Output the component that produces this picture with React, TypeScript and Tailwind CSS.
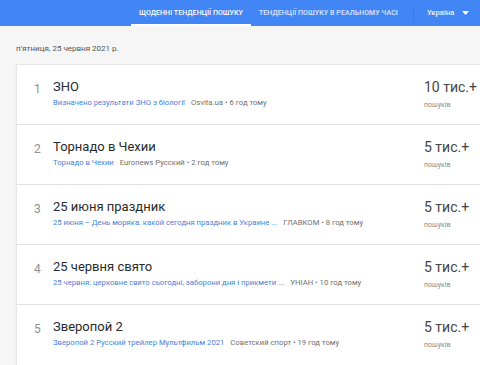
const ROWS = [
  { n: 1, title: "ЗНО", link: "Визначено результати ЗНО з біології", src: "Osvita.ua • 6 год тому", count: "10 тис.+" },
  { n: 2, title: "Торнадо в Чехии", link: "Торнадо в Чехии", src: "Euronews Русский • 2 год тому", count: "5 тис.+" },
  { n: 3, title: "25 июня праздник", link: "25 июня – День моряка: какой сегодня праздник в Украине ...", src: "ГЛАВКОМ • 8 год тому", count: "5 тис.+" },
  { n: 4, title: "25 червня свято", link: "25 червня: церковне свято сьогодні, заборони дня і прикмети ...", src: "УНІАН • 10 год тому", count: "5 тис.+" },
  { n: 5, title: "Зверопой 2", link: "Зверопой 2 Русский трейлер Мультфильм 2021", src: "Советский спорт • 19 год тому", count: "5 тис.+" },
];

function Header() {
  return (
    <div className="flex h-[26px] items-stretch bg-[#4285f4] text-[7px] font-medium uppercase tracking-[0.01em] text-white">
      <div className="ml-[131px] flex w-[120px] items-center justify-center border-b-2 border-white pt-[2px]">
        Щоденні тенденції пошуку
      </div>
      <div className="ml-[8px] flex items-center text-white/80">Тенденції пошуку в реальному часі</div>
      <div className="ml-[15px] h-[16px] w-px self-center bg-[#3b78e0]" />
      <div className="ml-[13px] flex items-center gap-[8px] text-[7.5px] normal-case text-white/90">
        Україна
        <svg width="7" height="4" viewBox="0 0 7 4">
          <path d="M0 0h7L3.5 4z" fill="white" />
        </svg>
      </div>
    </div>
  );
}

function Row({ r, last }: { r: (typeof ROWS)[number]; last: boolean }) {
  return (
    <div className={`flex h-[60px] items-start ${last ? "" : "border-b border-[#e3e3e3]"}`}>
      <div className="w-[36px] pl-[17px] pt-[15px] text-[12px] text-[#8f8f8f]">{r.n}</div>
      <div className="flex-1 pt-[13px]">
        <div className="text-[13px] leading-[18px] text-[#2a2a2a]">{r.title}</div>
        <div className="mt-[2px] whitespace-nowrap text-[7.7px] leading-[10px]">
          <span className="text-[#4a7fd6]">{r.link}</span>
          <span className="ml-[6px] text-[#707070]">{r.src}</span>
        </div>
      </div>
      <div className="w-[56px] pt-[13px]">
        <div className="text-[14px] leading-[18px] text-[#444]">{r.count}</div>
        <div className="mt-[4px] text-[7px] leading-[10px] text-[#8a8a8a]">пошуків</div>
      </div>
    </div>
  );
}

export default function App() {
  return (
    <div className="h-[365px] w-[480px] overflow-hidden bg-[#f6f6f6] font-['Roboto',sans-serif]">
      <Header />
      <div className="pl-[16px] pt-[18px] text-[8px] leading-[10px] text-[#555]">п’ятниця, 25 червня 2021 р.</div>
      <div className="ml-[16px] mt-[10px] border-l border-t border-[#e6e6e6] bg-white shadow-[0_1px_2px_rgba(0,0,0,0.08)]">
        {ROWS.map((r, i) => (
          <Row key={r.n} r={r} last={i === ROWS.length - 1} />
        ))}
      </div>
    </div>
  );
}
